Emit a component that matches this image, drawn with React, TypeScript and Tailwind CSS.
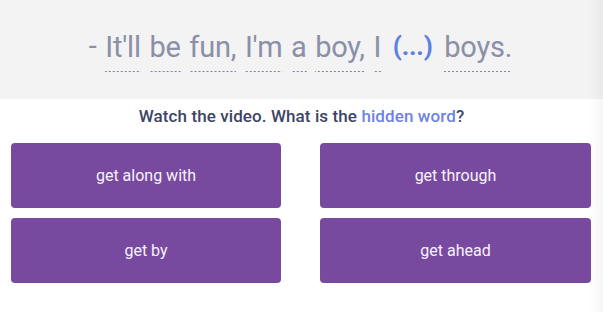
import React from "react";

const words: { t: string; u: boolean }[] = [
  { t: "It'll", u: true },
  { t: "be", u: true },
  { t: "fun,", u: true },
  { t: "I'm", u: true },
  { t: "a", u: true },
  { t: "boy,", u: true },
  { t: "I", u: true },
];

function W({ children }: { children: React.ReactNode }) {
  return (
    <span className="inline-block pb-[8px] bg-[linear-gradient(to_right,#7f839e_50%,transparent_50%)] bg-[length:4px_1px] bg-repeat-x bg-bottom leading-[34px]">
      {children}
    </span>
  );
}

export default function App() {
  return (
    <div
      className="w-[603px] h-[312px] bg-white overflow-hidden relative"
      style={{ fontFamily: "Roboto, 'Noto Sans', sans-serif" }}
    >
      <div className="h-[99px] bg-[#f3f3f3] flex items-end justify-center pb-[27px]">
        <div className="flex items-end gap-x-[8.6px] text-[29px] text-[#8b8fa8] tracking-[-0.2px] pr-[2px]">
          <span className="leading-[34px] pb-[9px]">-</span>
          {words.map((w, i) => (
            <W key={i}>{w.t}</W>
          ))}
          <span className="leading-[34px] pb-[9px] px-[3px] text-[26px] font-bold text-[#5b7fe2]">(...)</span>
          <W>boys.</W>
        </div>
      </div>
      <div className="text-center text-[17px] font-medium text-[#3d4466] mt-[6px] leading-[22px] tracking-[0.1px]">
        Watch the video. What is the <span className="text-[#6f82e6]">hidden word</span>?
      </div>
      <div className="grid grid-cols-[270px_271px] gap-x-[39px] gap-y-[10px] pl-[11px] mt-[16px]">
        {["get along with", "get through", "get by", "get ahead"].map((t) => (
          <div
            key={t}
            className="h-[65px] rounded-[4px] bg-[#774a9f] flex items-center justify-center text-[#f7f2fc] text-[16px]"
          >
            {t}
          </div>
        ))}
      </div>
      <div className="absolute top-0 right-0 w-[14px] h-full bg-[linear-gradient(to_right,rgba(0,0,0,0),rgba(0,0,0,0.04))]" />
    </div>
  );
}
